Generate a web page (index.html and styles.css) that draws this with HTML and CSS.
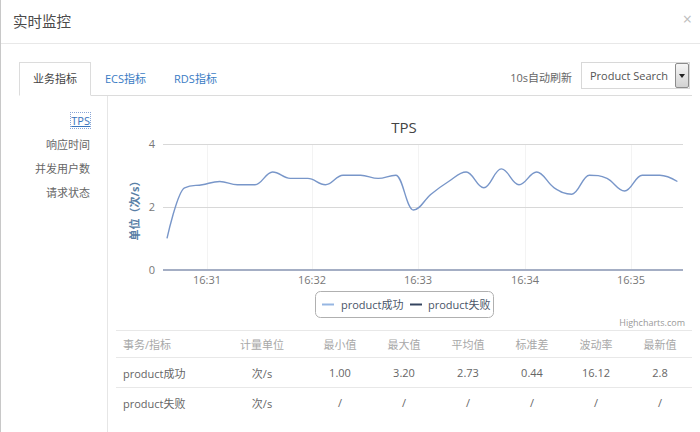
FILE: index.html
```html
<!DOCTYPE html>
<html lang="zh-CN">
<head>
<meta charset="utf-8">
<title>实时监控</title>
<link rel="stylesheet" href="styles.css">
</head>
<body>
<div class="modal">
  <div class="header">
    <h1 class="title">实时监控</h1>
    <span class="close">×</span>
  </div>
  <div class="content">
    <div class="tabbar">
      <ul class="tabs">
        <li class="tab active">业务指标</li>
        <li class="tab">ECS指标</li>
        <li class="tab">RDS指标</li>
      </ul>
      <div class="tools">
        <span class="refresh">10s自动刷新</span>
        <div class="select">
          <span class="select-text">Product Search</span>
          <span class="select-btn"><svg width="6" height="4" viewBox="0 0 6 4"><path d="M0 0H6L3 4Z" fill="#222"/></svg></span>
        </div>
      </div>
    </div>
    <div class="main">
      <nav class="side">
        <ul>
          <li><span class="current">TPS</span></li>
          <li>响应时间</li>
          <li>并发用户数</li>
          <li>请求状态</li>
        </ul>
      </nav>
      <div class="panel">
        <svg class="chart" width="584" height="234" viewBox="0 0 584 234">
          <text class="c-title" x="296" y="37" text-anchor="middle">TPS</text>
          <g class="vgrid">
            <line x1="99.5" y1="48" x2="99.5" y2="174"/>
            <line x1="204.5" y1="48" x2="204.5" y2="174"/>
            <line x1="310.5" y1="48" x2="310.5" y2="174"/>
            <line x1="417.5" y1="48" x2="417.5" y2="174"/>
            <line x1="523.5" y1="48" x2="523.5" y2="174"/>
          </g>
          <g class="hgrid">
            <line x1="55" y1="48.5" x2="575" y2="48.5"/>
            <line x1="55" y1="111.5" x2="575" y2="111.5"/>
          </g>
          <g class="ylabels">
            <text x="47" y="52" text-anchor="end">4</text>
            <text x="47" y="115" text-anchor="end">2</text>
            <text x="47" y="178" text-anchor="end">0</text>
          </g>
          <text class="y-title" transform="translate(31,112) rotate(-90)" text-anchor="middle">单位（次/s）</text>
          <g class="xlabels">
            <text x="99" y="188" text-anchor="middle">16:31</text>
            <text x="204" y="188" text-anchor="middle">16:32</text>
            <text x="310" y="188" text-anchor="middle">16:33</text>
            <text x="417" y="188" text-anchor="middle">16:34</text>
            <text x="523" y="188" text-anchor="middle">16:35</text>
          </g>
          <line class="zero" x1="55" y1="174" x2="575" y2="174"/>
          <path class="series" d="M59,142.4 C59,142.4 69.56,94.9 76.6,91.8 C83.64,88.7 87.16,89.96 94.2,88.7 C101.24,87.44 104.76,85.5 111.8,85.5 C118.84,85.5 122.36,88.7 129.4,88.7 C136.44,88.7 139.960,88.7 147,88.7 C154.04,88.7 157.56,76 164.6,76 C171.64,76 175.16,82.4 182.2,82.4 C189.24,82.4 192.76,82.4 199.8,82.4 C206.84,82.4 210.36,88.7 217.4,88.7 C224.44,88.7 227.96,79.2 235,79.2 C242.04,79.2 245.56,79.2 252.6,79.2 C259.64,79.2 263.16,82.4 270.2,82.4 C277.24,82.4 280.76,79.2 287.8,79.2 C294.84,79.2 298.36,114 305.4,114 C312.44,114 315.96,103.9 323,98.2 C330.04,92.5 333.56,89.94 340.6,85.5 C347.64,81.06 351.16,76 358.2,76 C365.24,76 368.76,91.8 375.8,91.8 C382.84,91.8 386.36,72.9 393.4,72.9 C400.44,72.9 403.96,88.7 411,88.7 C418.04,88.7 421.56,76 428.6,76 C435.64,76 439.16,87.36 446.2,91.8 C453.24,96.24 456.76,98.2 463.8,98.2 C470.84,98.2 474.36,79.2 481.4,79.2 C488.44,79.2 491.96,79.24 499,82.4 C506.04,85.56 509.56,95 516.6,95 C523.64,95 527.16,79.2 534.2,79.2 C541.24,79.2 544.76,79.2 551.8,79.2 C558.84,79.2 569.4,85.5 569.4,85.5"/>
          <rect class="legend-box" x="207.5" y="195.5" width="178" height="26" rx="5" ry="5"/>
          <line class="leg1" x1="214" y1="208.5" x2="226" y2="208.5"/>
          <text class="leg-text" x="233" y="212.5">product成功</text>
          <line class="leg2" x1="302" y1="208.5" x2="314" y2="208.5"/>
          <text class="leg-text" x="320" y="212.5">product失败</text>
          <text class="credits" x="577" y="230" text-anchor="end">Highcharts.com</text>
        </svg>
        <table class="stats">
          <colgroup>
            <col class="c-name"><col class="c-unit"><col class="c-num"><col class="c-num"><col class="c-num"><col class="c-num"><col class="c-num"><col class="c-num">
          </colgroup>
          <thead>
            <tr><th class="left">事务/指标</th><th>计量单位</th><th>最小值</th><th>最大值</th><th>平均值</th><th>标准差</th><th>波动率</th><th>最新值</th></tr>
          </thead>
          <tbody>
            <tr><td class="left">product成功</td><td>次/s</td><td>1.00</td><td>3.20</td><td>2.73</td><td>0.44</td><td>16.12</td><td>2.8</td></tr>
            <tr><td class="left">product失败</td><td>次/s</td><td>/</td><td>/</td><td>/</td><td>/</td><td>/</td><td>/</td></tr>
          </tbody>
        </table>
      </div>
    </div>
  </div>
</div>
</body>
</html>
```

FILE: styles.css
```css
* { box-sizing: border-box; }
html, body { margin: 0; padding: 0; background: #fff; }
body {
  width: 700px;
  height: 432px;
  overflow: hidden;
  font-family: "Open Sans", "Noto Sans CJK SC", sans-serif;
  font-size: 11px;
  color: #666;
}
.modal {
  height: 432px;
  border-left: 1px solid #c8c8c8;
}
.header {
  display: flex;
  justify-content: space-between;
  align-items: center;
  height: 44px;
  padding: 0 8px 2px 12px;
  border-bottom: 1px solid #e8e8e8;
}
.title {
  margin: 0;
  font-family: "Noto Sans CJK SC", sans-serif;
  font-size: 14.5px;
  font-weight: normal;
  color: #4a4a4a;
}
.close {
  font-size: 16px;
  line-height: 1;
  color: #bdbdbd;
  margin-top: -3px;
}
.content {
  padding: 18px 8px 0 18px;
}
.tabbar {
  display: flex;
  justify-content: space-between;
  height: 34px;
  border-bottom: 1px solid #dcdcdc;
}
.tabs {
  display: flex;
  list-style: none;
  margin: 0;
  padding: 0;
  height: 34px;
}
.tab {
  height: 34px;
  padding: 0 13px;
  line-height: 31px;
  border: 1px solid transparent;
  color: #3a7cc4;
}
.tab.active {
  border-color: #dcdcdc;
  border-bottom-color: #fff;
  background: #fff;
  color: #444;
}
.tools {
  display: flex;
  align-items: center;
  gap: 9px;
  height: 27px;
  margin-right: 2px;
}
.refresh {
  color: #666;
  margin-top: 3px;
}
.select {
  display: flex;
  width: 109px;
  height: 27px;
  border: 1px solid #d8d8d8;
  background: #fff;
}
.select-text {
  flex: 1;
  padding-left: 8px;
  line-height: 25px;
  color: #555;
}
.select-btn {
  display: flex;
  align-items: center;
  justify-content: center;
  width: 14px;
  height: 25px;
  border: 1px solid #8c8c8c;
  border-radius: 2px;
  background: linear-gradient(#f6f6f6, #d2d2d2);
}
.main {
  display: flex;
  height: 336px;
}
.side {
  width: 88px;
}
.side ul {
  list-style: none;
  margin: 0;
  padding: 13px 17px 0 0;
  text-align: right;
}
.side li {
  line-height: 24px;
  color: #666;
}
.side .current {
  color: #3a74bd;
  text-decoration: underline;
  outline: 1px dotted #8aa6d6;
}
.panel {
  flex: 1;
  border-left: 1px solid #e6e6e6;
}
.chart {
  display: block;
  font-family: "Open Sans", "Noto Sans CJK SC", sans-serif;
}
.c-title { font-size: 15px; fill: #444; }
.vgrid line { stroke: #f3f3f3; stroke-width: 1; }
.hgrid line { stroke: #d8d8d8; stroke-width: 1; }
.ylabels text, .xlabels text { font-size: 11px; fill: #777; }
.y-title { font-size: 11px; font-weight: bold; fill: #5a7fa6; }
.zero { stroke: #a4aec4; stroke-width: 2; }
.series { fill: none; stroke: #7896c9; stroke-width: 1.4; }
.legend-box { fill: #fff; stroke: #b0b0b0; stroke-width: 1; }
.leg1 { stroke: #96b6e2; stroke-width: 2; }
.leg2 { stroke: #34445f; stroke-width: 2; }
.leg-text { font-size: 11px; fill: #4a5668; }
.credits { font-size: 9px; fill: #999; }
.stats {
  margin-left: 8px;
  width: 576px;
  border-collapse: collapse;
  table-layout: fixed;
}
.c-name { width: 100px; }
.c-unit { width: 92px; }
.c-num { width: 64px; }
.stats th {
  height: 27px;
  font-weight: normal;
  color: #a8a8a8;
  text-align: center;
  border-top: 1px solid #e8e8e8;
  border-bottom: 1px solid #e8e8e8;
  padding: 0;
}
.stats td {
  height: 30px;
  text-align: center;
  color: #666;
  padding: 0;
}
.stats tbody tr:first-child td {
  border-bottom: 1px solid #e8e8e8;
}
.stats .left {
  text-align: left;
  padding-left: 7px;
}
```
